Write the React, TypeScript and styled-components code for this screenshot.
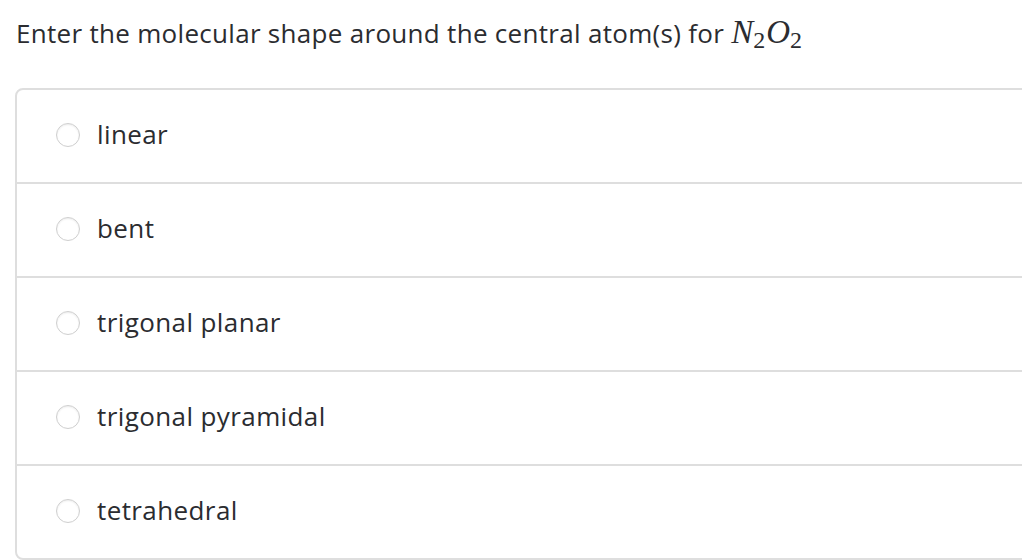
import React from "react";
import styled, { createGlobalStyle } from "styled-components";

const Global = createGlobalStyle`
  html, body { margin: 0; padding: 0; background: #fff; }
  body { font-family: "Open Sans", "Noto Sans", sans-serif; color: #2b2b2b; }
`;

const Page = styled.div`
  padding: 14px 0 0 16px;
  width: 1100px;
`;

const Title = styled.h1`
  margin: 0;
  font-size: 26px;
  font-weight: 400;
  line-height: 36px;
  letter-spacing: 0.3px;
  color: #2b2c30;
  white-space: nowrap;
`;

const Math = styled.span`
  font-family: "Liberation Serif", "DejaVu Serif", serif;
  font-size: 33px;
  letter-spacing: 0;
  margin-left: 7px;
`;

const Var = styled.i`
  font-style: italic;
`;

const Sub = styled.sub`
  font-style: normal;
  font-size: 24px;
  vertical-align: -5px;
  line-height: 0;
  margin-right: 1px;
`;

const Card = styled.div`
  margin-top: 37px;
  margin-left: -1px;
  border: 2px solid #dedede;
  border-radius: 8px;
  display: flex;
  flex-direction: column;
`;

const Row = styled.label<{ $last?: boolean }>`
  display: flex;
  align-items: center;
  gap: 17px;
  height: 92px;
  padding-left: 39px;
  border-bottom: ${(p) => (p.$last ? "none" : "2px solid #dedede")};
  box-sizing: content-box;
`;

const Radio = styled.span`
  width: 22px;
  height: 22px;
  border-radius: 50%;
  border: 1px solid #cfcfcf;
  box-shadow: inset 0 1px 2px rgba(0, 0, 0, 0.08);
  background: #fff;
  flex: none;
  margin-top: -3px;
`;

const Label = styled.span`
  font-size: 26px;
  letter-spacing: 0.4px;
  color: #2b2c30;
  margin-top: -5px;
`;

const options = ["linear", "bent", "trigonal planar", "trigonal pyramidal", "tetrahedral"];

export default function App() {
  return (
    <>
      <Global />
      <Page>
        <Title>
          Enter the molecular shape around the central atom(s) for
          <Math>
            <Var>N</Var>
            <Sub>2</Sub>
            <Var>O</Var>
            <Sub>2</Sub>
          </Math>
        </Title>
        <Card>
          {options.map((o, i) => (
            <Row key={o} $last={i === options.length - 1}>
              <Radio />
              <Label>{o}</Label>
            </Row>
          ))}
        </Card>
      </Page>
    </>
  );
}
